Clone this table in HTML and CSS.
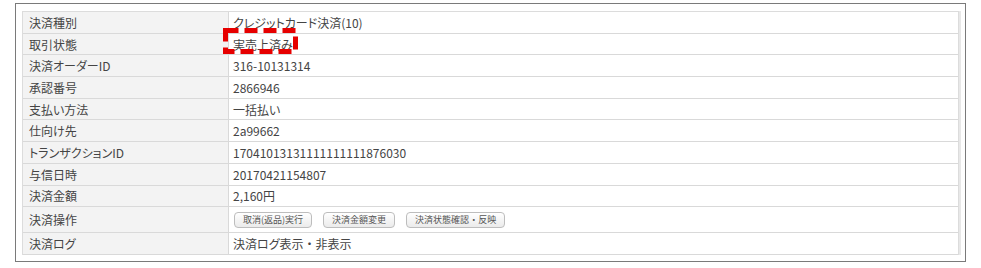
FILE: index.html
```html
<!DOCTYPE html>
<html lang="ja">
<head>
  <meta charset="UTF-8" />
  <title>決済情報</title>
  <link rel="stylesheet" href="styles.css">
</head>
<body>
  <div class="panel">
    <div class="info-table">
      <div class="row"><div class="label">決済種別</div><div class="value">クレジットカード決済(10)</div></div>
      <div class="row">
        <div class="label">取引状態</div>
        <div class="value status">
          実売上済み
          <svg class="mark" width="76" height="27" viewBox="0 0 76 27">
            <rect x="2.5" y="2.5" width="70" height="21" fill="none" stroke="#e60000" stroke-width="5" stroke-dasharray="13 6" />
          </svg>
        </div>
      </div>
      <div class="row"><div class="label">決済オーダーID</div><div class="value">316-10131314</div></div>
      <div class="row"><div class="label">承認番号</div><div class="value">2866946</div></div>
      <div class="row"><div class="label">支払い方法</div><div class="value">一括払い</div></div>
      <div class="row"><div class="label">仕向け先</div><div class="value">2a99662</div></div>
      <div class="row"><div class="label">トランザクションID</div><div class="value">17041013131111111111876030</div></div>
      <div class="row"><div class="label">与信日時</div><div class="value">20170421154807</div></div>
      <div class="row"><div class="label">決済金額</div><div class="value">2,160円</div></div>
      <div class="row tall">
        <div class="label">決済操作</div>
        <div class="value actions">
          <button type="button">取消(返品)実行</button>
          <button type="button">決済金額変更</button>
          <button type="button">決済状態確認<span class="dot">・</span>反映</button>
        </div>
      </div>
      <div class="row"><div class="label">決済ログ</div><div class="value">決済ログ表示<span class="dot">・</span>非表示</div></div>
    </div>
  </div>
</body>
</html>
```

FILE: styles.css
```css
body {
  margin: 0;
  background: #ffffff;
  font-family: "Noto Sans CJK JP", "Liberation Sans", sans-serif;
  font-size: 12px;
  color: #444;
}

.panel {
  width: 951px;
  height: 259px;
  margin: 3px 0 0 15px;
  padding: 7px 5px 6px 6px;
  border: 1px solid #7a7a7a;
  box-sizing: border-box;
}

.info-table {
  width: 937px;
  border: 1px solid #dcdcdc;
  border-bottom: none;
  box-sizing: border-box;
  box-shadow: 2px 0 0 #e8e8e8;
}

.row {
  display: flex;
  height: 21.7px;
  box-sizing: border-box;
  border-bottom: 1px solid #d9d9d9;
}

.row.tall {
  height: 26px;
}

.label {
  width: 199px;
  padding-left: 6px;
  background: #f3f3f3;
  border-right: 1px solid #d9d9d9;
  display: flex;
  align-items: center;
  font-feature-settings: "palt";
}

.value {
  flex: 1;
  padding-left: 4px;
  display: flex;
  align-items: center;
  background: #fff;
  font-feature-settings: "palt";
}

/* keep the full-width middle dot */
.dot {
  font-feature-settings: normal;
}

.status {
  position: relative;
}

/* red dashed annotation around the status text */
.mark {
  position: absolute;
  left: -6px;
  top: -6px;
}

.actions {
  gap: 11px;
  padding-left: 5px;
}

.actions button {
  height: 16px;
  padding: 0 8px;
  font-family: inherit;
  font-size: 9px;
  line-height: 14px;
  color: #555;
  border: 1px solid #bdbdbd;
  border-radius: 4px;
  background: linear-gradient(#ffffff, #ebebeb);
}
```
